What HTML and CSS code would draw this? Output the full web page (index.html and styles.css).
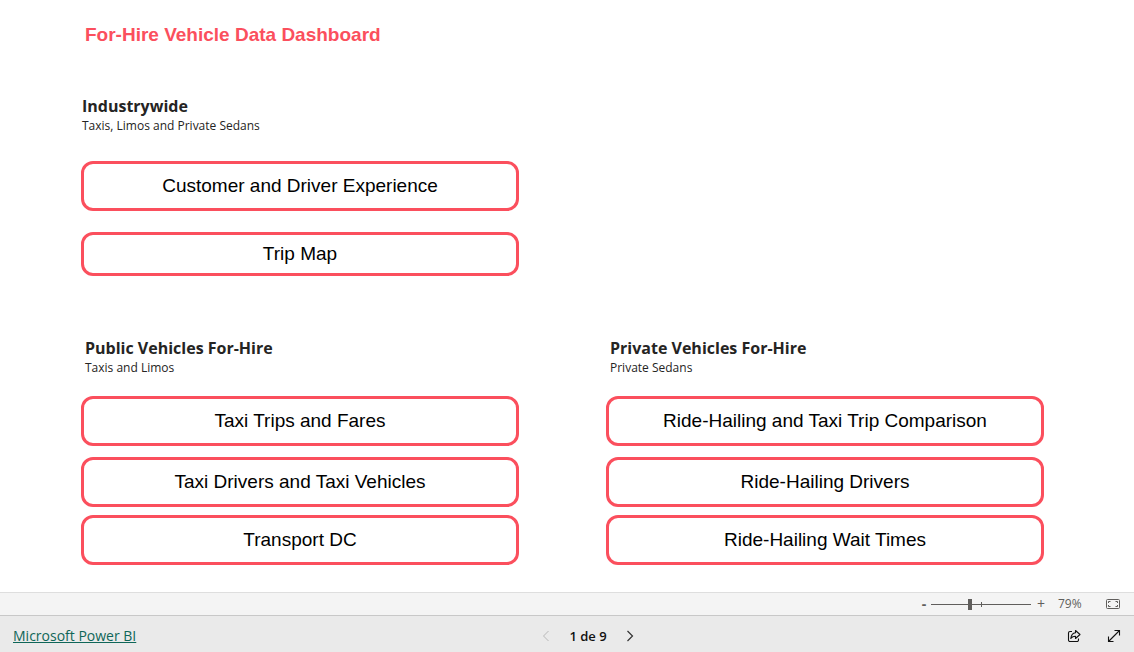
FILE: index.html
```html
<!DOCTYPE html>
<html lang="en">
<head>
<meta charset="utf-8">
<meta name="viewport" content="width=device-width, initial-scale=1">
<title>For-Hire Vehicle Data Dashboard</title>
<link rel="stylesheet" href="styles.css">
</head>
<body>
<main class="report">
  <h1 class="report-title">For-Hire Vehicle Data Dashboard</h1>
  <div class="sections">
    <section class="section section-start">
      <header class="section-head section-head-flush">
        <h2>Industrywide</h2>
        <p>Taxis, Limos and Private Sedans</p>
      </header>
      <div class="links links-spaced">
        <button class="nav-button" type="button">Customer and Driver Experience</button>
        <button class="nav-button nav-button-short" type="button">Trip Map</button>
      </div>
    </section>
    <section class="section section-start">
      <header class="section-head">
        <h2>Public Vehicles For-Hire</h2>
        <p>Taxis and Limos</p>
      </header>
      <div class="links">
        <button class="nav-button nav-button-lead" type="button">Taxi Trips and Fares</button>
        <button class="nav-button" type="button">Taxi Drivers and Taxi Vehicles</button>
        <button class="nav-button" type="button">Transport DC</button>
      </div>
    </section>
    <section class="section">
      <header class="section-head">
        <h2>Private Vehicles For-Hire</h2>
        <p>Private Sedans</p>
      </header>
      <div class="links">
        <button class="nav-button nav-button-lead" type="button">Ride-Hailing and Taxi Trip Comparison</button>
        <button class="nav-button" type="button">Ride-Hailing Drivers</button>
        <button class="nav-button" type="button">Ride-Hailing Wait Times</button>
      </div>
    </section>
  </div>
</main>
<div class="zoom-bar">
  <button class="zoom-step zoom-out" type="button" aria-label="Zoom out">-</button>
  <input class="zoom-slider" type="range" min="0" max="100" value="39" aria-label="Zoom level">
  <button class="zoom-step" type="button" aria-label="Zoom in">+</button>
  <span class="zoom-value">79%</span>
  <button class="icon-button" type="button" aria-label="Fit to page">
    <svg width="16" height="12" viewBox="0 0 16 12" fill="none" stroke="#605e5c">
      <rect x="1.5" y="1.5" width="13" height="9" rx="1"/>
      <path d="M5.500 3.500h-2v1.500M3.500 7v1.500h2M10.500 3.500h2v1.500M12.500 7v1.500h-2"/>
    </svg>
  </button>
</div>
<footer class="footer">
  <a class="brand" href="#">Microsoft Power BI</a>
  <nav class="pager" aria-label="Pages">
    <button class="icon-button" type="button" aria-label="Previous page" disabled>
      <svg width="8" height="12" viewBox="0 0 8 12" fill="none" stroke="#b8b8b8"><path d="M6.500 1L1.500 6l5 5"/></svg>
    </button>
    <span class="page-label">1 de 9</span>
    <button class="icon-button" type="button" aria-label="Next page">
      <svg width="8" height="12" viewBox="0 0 8 12" fill="none" stroke="#333" stroke-width="1.200"><path d="M1.500 1l5 5-5 5"/></svg>
    </button>
  </nav>
  <div class="actions">
    <button class="icon-button" type="button" aria-label="Share">
      <svg width="14" height="14" viewBox="0 0 14 14" fill="none" stroke="#111" stroke-width="1.100" stroke-linejoin="round">
        <path d="M5 2.500H3A1.500 1.500 0 0 0 1.500 4v7A1.500 1.500 0 0 0 3 12.500h7a1.500 1.500 0 0 0 1.500-1.500v-1.500"/>
        <path d="M8.500 1.500l4.500 4-4.500 4V7.300C6.500 7.200 5 8 3.800 9.500 4.200 6 5.800 4 8.500 3.700z"/>
      </svg>
    </button>
    <button class="icon-button" type="button" aria-label="Full screen">
      <svg width="14" height="14" viewBox="0 0 14 14" fill="none" stroke="#111" stroke-width="1.100">
        <path d="M1.500 12.500l11-11M7.500 1.500h5v5M1.500 7.500v5h5"/>
      </svg>
    </button>
  </div>
</footer>
</body>
</html>
```
FILE: styles.css
```css
* { box-sizing: border-box; }

body {
  margin: 0;
  min-height: 100vh;
  display: flex;
  flex-direction: column;
  background: #fff;
  color: #252423;
  font-family: "Open Sans", "Noto Sans", sans-serif;
}

h1, h2, p { margin: 0; }

button {
  margin: 0;
  padding: 0;
  border: 0;
  background: none;
  font: inherit;
  color: inherit;
}

.report {
  flex: 1;
  padding: 23px 90px 26px 81px;
}

.report-title {
  padding-left: 4px;
  color: #fb4f5d;
  font: bold 19px/24px "Liberation Sans", Arial, sans-serif;
}

.sections {
  display: grid;
  grid-template-columns: 1fr 1fr;
  gap: 62px 87px;
  margin-top: 49px;
}

.section-start { grid-column: 1; }

.section-head { padding-left: 4px; }

.section-head-flush { padding-left: 1px; }

.section-head h2 {
  font: 700 16px/20px "Open Sans", "Noto Sans", sans-serif;
}

.section-head p {
  font: 12px/20px "Open Sans", "Noto Sans", sans-serif;
}

.links {
  display: flex;
  flex-direction: column;
  gap: 8px;
  margin-top: 18px;
}

.links-spaced {
  gap: 21px;
  margin-top: 25px;
}

.nav-button {
  min-height: 50px;
  border: 3px solid #fb4f5d;
  border-radius: 12px;
  color: #000;
  font: 19px/24px "Liberation Sans", Arial, sans-serif;
}

.nav-button-lead { margin-bottom: 3px; }

.nav-button-short { min-height: 44px; }

.zoom-bar {
  display: flex;
  align-items: center;
  justify-content: flex-end;
  height: 23px;
  padding-right: 13px;
  border-top: 1px solid #dedede;
  background: #f4f4f4;
  color: #605e5c;
}

.zoom-step {
  width: 10px;
  font-size: 14px;
  line-height: 20px;
}

.zoom-out { font-weight: 700; }

.zoom-slider {
  appearance: none;
  width: 100px;
  height: 12px;
  margin: 0 5px 0 2px;
  background:
    linear-gradient(#605e5c, #605e5c) 50px 50% / 1px 5px no-repeat,
    linear-gradient(#605e5c, #605e5c) 0 50% / 100% 1px no-repeat;
}

.zoom-slider::-webkit-slider-thumb {
  appearance: none;
  width: 4px;
  height: 11px;
  background: #605e5c;
}

.zoom-value {
  width: 48px;
  padding-left: 12px;
  margin-right: 11px;
  font-size: 12px;
  line-height: 20px;
}

.icon-button {
  display: flex;
  align-items: center;
  justify-content: center;
}

.footer {
  display: grid;
  grid-template-columns: 1fr auto 1fr;
  align-items: center;
  min-height: 37px;
  padding: 3px 13px 0;
  border-top: 1px solid #c8c8c8;
  background: #eaeaea;
}

.brand {
  justify-self: start;
  color: #0f6658;
  font-size: 14px;
  line-height: 20px;
}

.pager {
  display: flex;
  align-items: center;
  gap: 19px;
  margin-left: 42px;
}

.page-label {
  color: #111;
  font-size: 13px;
  font-weight: 600;
  line-height: 20px;
}

.actions {
  display: flex;
  justify-self: end;
  gap: 26px;
}
```
